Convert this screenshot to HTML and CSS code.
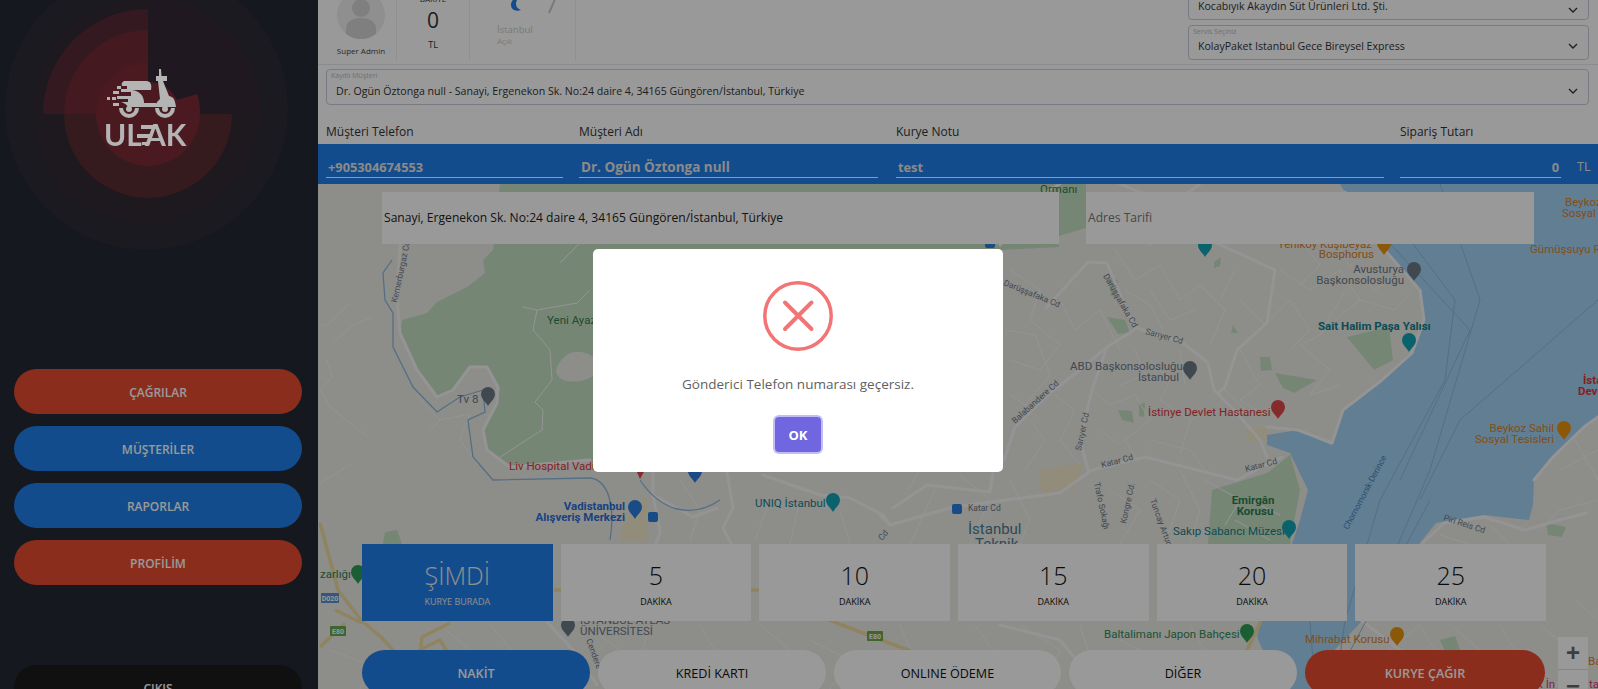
FILE: index.html
```html
<!DOCTYPE html>
<html lang="en">
<head>
    <meta charset="UTF-8">
    <meta name="viewport" content="width=device-width, initial-scale=1.0">
    <title>Ulak</title>
    <link rel="stylesheet" href="styles.css">
</head>
<body>
    <aside class="sidebar">
        <div class="logo">
            <svg viewBox="0 0 318 369" width="318" height="369">
                <circle cx="146.500" cy="108.500" r="141.500" fill="#1a1a20"/>
                <circle cx="146.500" cy="110" r="113.500" fill="#1e191f"/>
                <path d="M148 114V-3A113 113 0 0 1 260 110L260 114Z" fill="#201820"/>
                <path d="M148 114V9A105 105 0 0 0 43 114Z" fill="#341a20"/>
                <path d="M148 114H232A84 84 0 1 1 64 114Z" fill="#351b1e"/>
                <path d="M148 114V30A84 84 0 0 0 64 114Z" fill="#441a20"/>
                <path d="M148 114V62A52 52 0 0 0 96 114A52 52 0 1 0 200 114A52 52 0 0 0 197 94L177 100A32 32 0 0 0 148 82Z" fill="#4a1a20"/>
                <g fill="#b4b4b4">
                    <path d="M124 81H146C151 81 152 85 151 90H132C140 91 144 96 144 103V107H128C126 104 124 103 121 102H128V99H117V96H131V92H121V89H127V86H122C121 84 122 82 124 81Z"/>
                    <rect x="107" y="97" width="3" height="3"/>
                    <rect x="112" y="97" width="4" height="3"/>
                    <rect x="113" y="91" width="6" height="3"/>
                    <rect x="117" y="86" width="4" height="3"/>
                    <rect x="113" y="103" width="6" height="3"/>
                    <path d="M159 69L161 69L161.500 76H159Z"/>
                    <path d="M156 76H167V81H163L169 96C174 97 175 100 176 107H155C156 103 157 102 160 99L158 81H156Z"/>
                    <path d="M144 103H156V107H144Z"/>
                    <path d="M119 108A10 10 0 0 0 139 108H135A6 6 0 0 1 123 108Z"/>
                    <path d="M155 108A10 10 0 0 0 175 108H171A6 6 0 0 1 159 108Z"/>
                    <circle cx="129" cy="109" r="3"/>
                    <circle cx="165" cy="109" r="3"/>
                    <rect x="141" y="125" width="15" height="4"/>
                    <rect x="137" y="134" width="14" height="4"/>
                    <rect x="142" y="142" width="6" height="3"/>
                </g>
                <text class="logo-word" x="104" y="146">UL</text>
                <text class="logo-word" x="145" y="146">AK</text>
            </svg>
        </div>
        <nav class="menu">
            <a class="pill pill-red">ÇAĞRILAR</a>
            <a class="pill pill-blue">MÜŞTERİLER</a>
            <a class="pill pill-blue">RAPORLAR</a>
            <a class="pill pill-red">PROFİLİM</a>
            <a class="pill pill-black">ÇIKIŞ</a>
        </nav>
    </aside>

    <main class="content">
        <header class="topbar">
            <div class="top-cell user-cell">
                <svg class="avatar" viewBox="0 0 48 48" width="48" height="48">
                    <circle cx="24" cy="24" r="24" fill="#eee"/>
                    <circle cx="24" cy="17" r="9" fill="#d4d4d4"/>
                    <path d="M9 43V38C9 31 15 27 24 27S39 31 39 38V43C35 46 30 48 24 48S13 46 9 43Z" fill="#d4d4d4"/>
                </svg>
                <span class="user-name">Super Admin</span>
            </div>
            <div class="top-cell balance-cell">
                <span class="balance-title">BAKİYE</span>
                <span class="balance-value">0</span>
                <span class="balance-unit">TL</span>
            </div>
            <div class="top-cell weather-cell">
                <div class="weather-icons">
                    <svg viewBox="0 0 14 16" width="14" height="16">
                        <path d="M10 0C5 1 2 4 2 8S6 15 12 13C9 12 7 10 7 7S8 3 10 0Z" fill="#1f7fea"/>
                    </svg>
                    <svg viewBox="0 0 14 18" width="14" height="18">
                        <path d="M13 0L6 16" stroke="#ccc" stroke-width="2" fill="none"/>
                    </svg>
                </div>
                <span class="weather-city">İstanbul</span>
                <span class="weather-state">Açık</span>
            </div>
            <div class="top-selects">
                <div class="select select-cut">
                    <span class="select-text">Kocabıyık Akaydın Süt Ürünleri Ltd. Şti.</span>
                    <svg class="chevron" viewBox="0 0 10 6" width="10" height="6"><path d="M1 1L5 5L9 1" stroke="#333" stroke-width="1.300" fill="none"/></svg>
                </div>
                <div class="select">
                    <span class="select-label">Servis Seçiniz</span>
                    <span class="select-text">KolayPaket Istanbul Gece Bireysel Express</span>
                    <svg class="chevron" viewBox="0 0 10 6" width="10" height="6"><path d="M1 1L5 5L9 1" stroke="#333" stroke-width="1.300" fill="none"/></svg>
                </div>
            </div>
        </header>

        <div class="select select-wide">
            <span class="select-label">Kayıtlı Müşteri</span>
            <span class="select-text">Dr. Ogün Öztonga null - Sanayi, Ergenekon Sk. No:24 daire 4, 34165 Güngören/İstanbul, Türkiye</span>
            <svg class="chevron" viewBox="0 0 10 6" width="10" height="6"><path d="M1 1L5 5L9 1" stroke="#333" stroke-width="1.300" fill="none"/></svg>
        </div>

        <div class="field-grid field-labels">
            <span>Müşteri Telefon</span>
            <span>Müşteri Adı</span>
            <span>Kurye Notu</span>
            <span>Sipariş Tutarı</span>
        </div>
        <div class="field-grid field-band">
            <div class="field-value">+905304674553</div>
            <div class="field-value field-name">Dr. Ogün Öztonga null</div>
            <div class="field-value">test</div>
            <div class="field-value field-amount">0</div>
            <div class="field-unit">TL</div>
        </div>

        <section class="map-area">
            <svg class="map" viewBox="318 184 1280 505" width="1280" height="505">
                <defs>
                    <path id="pin" d="M0 9C-2 5-7 2-7-3A7 7 0 0 1 7-3C7 2 2 5 0 9Z"/>
                </defs>
                <rect x="318" y="184" width="1280" height="505" fill="#ecebe7"/>

                <!-- parks -->
                <g fill="#c5e0c4">
                    <path d="M500 184H1086V228L1059 236V247L1000 250L900 380L800 470L600 470L590 460L510 466L487 450L483 430L497 403L498 387L487 367L470 367L453 390L437 397L417 370L400 333L402 320L427 313L437 302L467 287L485 273L483 260L493 250Z"/>
                    <path d="M1212 490L1267 473L1290 455L1300 490L1290 544H1208Z"/>
                    <path d="M1347 337L1389 327L1393 360L1374 370Z"/>
                    <path d="M1109 277L1118 280L1116 297L1111 296Z"/>
                    <path d="M1107 317L1125 320L1130 333L1118 334Z"/>
                    <path d="M1275 373L1317 380L1294 393L1283 388Z"/>
                    <path d="M1260 357L1270 357L1272 370L1261 371Z"/>
                    <path d="M1118 410L1132 411L1134 423L1122 420Z"/>
                    <path d="M1139 404L1145 403L1144 417L1139 416Z"/>
                    <path d="M1214 262L1221 257L1220 266L1214 268Z"/>
                    <path d="M1233 325L1238 333H1231Z"/>
                    <path d="M1546 523L1566 527L1562 537L1548 535Z"/>
                    <path d="M385 532L397 530L402 544H383Z"/>
                    <path d="M1440 640L1455 636L1460 650L1445 652Z"/>
                </g>
                <path d="M560 362C570 346 592 350 600 365C600 380 570 386 560 378C554 373 556 368 560 362Z" fill="#ecebe7"/>
                <g fill="#f3ebcb">
                    <path d="M623 520L647 495V542H620Z"/>
                    <path d="M1040 480L1060 475V495L1045 497Z"/>
                    <path d="M1244 430L1267 427V440L1250 442Z"/>
                    <path d="M1040 470L1084 463L1075 490L1040 490Z"/>
                </g>

                <!-- sea -->
                <path d="M1340 184H1598V417L1584 427L1553 457L1534 480L1533 505L1529 520L1484 515L1436 523L1419 544L1362 621L1325 660L1320 689H1280L1257 637L1261 621L1290 550L1300 520L1308 490L1290 453L1267 445L1267 435L1298 430L1332 445L1343 410L1382 380L1412 353L1424 320L1420 290L1383 250L1345 192Z" fill="#a4d2f5"/>

                <!-- roads -->
                <g fill="none" stroke="#f7f7f7" stroke-width="1" stroke-linejoin="round">
                    <path d="M320 325H327L350 303M333 343L353 325L373 317M327 360L332 377L320 390L330 407L368 437M353 463L320 483"/>
                    <path d="M523 307L537 310L533 330L550 350L552 380L535 402L543 410L542 430L500 457M537 310L577 303L590 290M560 263L580 243"/>
                    <path d="M416 395L440 420L430 430M440 420L470 414L460 440L478 465"/>
                    <path d="M680 480L700 510L690 540M770 500L755 540M800 500L790 544M840 510L850 544M905 495L920 470M935 490L910 544M960 475L990 500L970 544M1010 480L1030 520L1020 544"/>
                    <path d="M1010 270L1040 290L1030 320L1060 345L1040 370L1010 360M1060 300L1075 330L1100 310L1120 350M1005 330L1035 335L1050 375L1025 405L1010 395M1030 420L1045 440L1025 470M1055 395L1075 410L1060 440L1080 465"/>
                    <path d="M1092 390L1110 405L1135 395L1150 420L1125 440L1140 465M1100 430L1120 445M1150 360L1170 380L1160 400L1190 420L1215 410M1180 350L1185 385M1135 350L1145 375L1120 385M1150 440L1190 450L1205 470M1190 420L1180 455"/>
                    <path d="M1115 250L1135 280L1160 265L1180 300L1200 285L1225 310L1210 345M1150 290L1170 320L1195 310M1235 270L1220 300M1125 290L1150 305L1165 335M1240 300L1265 325L1290 300L1310 330L1290 350M1280 270L1310 290L1340 270L1360 300L1335 320M1345 260L1375 290L1405 270M1300 240L1320 265L1300 285M1360 300L1395 310L1412 290"/>
                    <path d="M1240 350L1260 385L1240 400L1265 415M1300 345L1330 370L1310 395L1340 385M1225 390L1250 415L1285 405M1345 290L1320 335L1300 345"/>
                    <path d="M1110 490L1140 510L1120 544M1150 480L1180 500L1165 544M1180 470L1200 510L1190 544M1205 480L1240 500L1225 525M1250 500L1280 515M1235 520L1270 540"/>
                    <path d="M1440 535L1470 544M1490 525L1510 544M1540 530L1560 510L1598 500M1560 470L1598 450M1575 440L1598 480"/>
                    <path d="M585 625L620 650L610 689M650 625L640 660L680 689M700 625L720 660L700 689M760 625L790 650L770 689M810 640L850 660L830 689M900 625L920 670L960 689M975 625L1000 660L985 689M1020 625L1060 650L1040 689M1080 625L1100 689M1120 640L1160 660L1130 689M1190 625L1210 660L1180 689"/>
                    <path d="M1390 650L1420 625L1440 660L1420 689M1450 625L1480 650L1470 689M1500 625L1520 660L1500 689M1540 625L1570 650L1555 689M1575 600L1598 620"/>
                    <path d="M330 650L370 665L360 689M440 625L470 650L450 689M490 625L520 660L500 689"/>
                </g>
                <g fill="none" stroke="#f7f7f7" stroke-width="3" stroke-linejoin="round" stroke-linecap="round">
                    <path d="M400 243L397 297L400 333L417 370L437 397L453 390L470 367L487 367L498 387L497 403L483 430L487 450L510 467L590 460"/>
                    <path d="M763 475L820 495L850 498L883 515L890 525L953 507L1060 493L1092 470L1145 457L1237 480L1282 457"/>
                    <path d="M890 525L880 515M993 472L990 492L927 485L893 508"/>
                    <path d="M653 465V495L693 517L717 508M653 495L660 532L655 547M727 472L733 508L723 528L733 547"/>
                    <path d="M1046 308L1088 262L1107 263L1134 327L1183 343L1208 363L1214 390L1237 413L1260 440L1267 457"/>
                    <path d="M1134 330L1107 347L1076 373L1050 393L1015 427L1004 460"/>
                    <path d="M1088 470L1080 440L1092 390L1107 347"/>
                    <path d="M1210 240L1275 270L1267 323L1237 350L1225 387L1218 393"/>
                    <path d="M1420 290L1424 320L1412 353L1382 380L1343 410L1332 443L1298 430L1267 427"/>
                    <path d="M1345 192L1383 248L1418 288"/>
                    <path d="M1423 543L1444 523L1484 517L1525 530L1549 523L1586 513"/>
                    <path d="M1534 480L1553 457L1584 427L1598 417"/>
                    <path d="M548 623L573 650L597 685"/>
                    <path d="M1000 245L1040 195L1060 184M1150 244L1170 205L1200 184M1120 184L1160 200"/>
                    <path d="M1362 621L1400 650L1440 689M1000 625L1060 640L1100 689"/>
                </g>
                <g fill="none" stroke="#eedc9f" stroke-width="3.500" stroke-linejoin="round">
                    <path d="M320 523L332 567L338 590L361 620L381 637L402 660L418 689"/>
                    <path d="M450 623L422 637L416 689"/>
                    <path d="M320 647L345 623"/>
                    <path d="M335 610L362 623"/>
                    <path d="M400 660L440 640L470 689"/>
                    <path d="M554 590H760L834 622L900 647L960 670"/>
                    <path d="M1261 621L1240 665"/>
                </g>
                <g fill="none" stroke="#8db9dd" stroke-width="1.300">
                    <path d="M392 260L383 273L385 300L393 313L393 347L413 387L437 412L460 397L483 390L485 412L468 420L473 457L493 480L590 478"/>
                    <path d="M590 478C610 480 615 510 610 540M640 480C660 510 690 520 720 500"/>
                </g>
                <g fill="none" stroke="#8bb9e0" stroke-width="1">
                    <path d="M1440 184L1480 300L1430 470L1365 621"/>
                    <path d="M1598 300L1460 420L1420 500"/>
                    <path d="M1350 200L1470 330L1400 480"/>
                    <path d="M1410 240L1455 300L1445 380L1380 500L1345 621"/>
                    <path d="M1430 500L1330 689"/>
                    <path d="M1310 621L1315 689M1345 621L1335 689"/>
                </g>

                <!-- labels -->
                <g class="map-text">
                    <text x="1040" y="193" fill="#2e7d4f">Ormanı</text>
                    <text x="1565" y="206" fill="#d9822b">Beykoz</text>
                    <text x="1562" y="217" fill="#d9822b">Sosyal</text>
                    <text x="1530" y="253" fill="#d9822b">Gümüşsuyu R</text>
                    <text x="1372" y="248" text-anchor="end" fill="#d9822b">Yeniköy Kuşibeyaz</text>
                    <text x="1374" y="258" text-anchor="end" fill="#d9822b">Bosphorus</text>
                    <text x="1404" y="273" text-anchor="end" fill="#6b7a86">Avusturya</text>
                    <text x="1404" y="284" text-anchor="end" fill="#6b7a86">Başkonsolosluğu</text>
                    <text x="1318" y="330" class="bold" fill="#12808c">Sait Halim Paşa Yalısı</text>
                    <text x="1070" y="370" fill="#6b7a86">ABD Başkonsolosluğu</text>
                    <text x="1179" y="381" text-anchor="end" fill="#6b7a86">İstanbul</text>
                    <text x="1148" y="416" fill="#d9383a">İstinye Devlet Hastanesi</text>
                    <text x="1554" y="432" text-anchor="end" fill="#d9822b">Beykoz Sahil</text>
                    <text x="1554" y="443" text-anchor="end" fill="#d9822b">Sosyal Tesisleri</text>
                    <text x="1583" y="384" class="bold" fill="#d9383a">İsta</text>
                    <text x="1578" y="395" class="bold" fill="#d9383a">Devl</text>
                    <text x="547" y="324" fill="#2e7d4f">Yeni Ayazağa</text>
                    <text x="457" y="403" fill="#6b7a86">Tv 8</text>
                    <text x="509" y="470" fill="#d9383a">Liv Hospital Vadi</text>
                    <text x="625" y="510" class="bold" text-anchor="end" fill="#2a6fd6">Vadistanbul</text>
                    <text x="625" y="521" class="bold" text-anchor="end" fill="#2a6fd6">Alışveriş Merkezi</text>
                    <text x="755" y="507" fill="#12808c">UNIQ İstanbul</text>
                    <text x="968" y="511" class="small" fill="#6b7a86">Katar Cd</text>
                    <text x="968" y="534" class="big" fill="#4c7a92">İstanbul</text>
                    <text x="975" y="549" class="big" fill="#4c7a92">Teknik</text>
                    <text x="1253" y="504" class="bold" text-anchor="middle" fill="#2e7d4f">Emirgân</text>
                    <text x="1255" y="515" class="bold" text-anchor="middle" fill="#2e7d4f">Korusu</text>
                    <text x="1173" y="535" fill="#12808c">Sakıp Sabancı Müzesi</text>
                    <text x="320" y="578" fill="#2e7d4f">zarlığı</text>
                    <text x="580" y="624" fill="#6b7a86">İSTANBUL ATLAS</text>
                    <text x="580" y="635" fill="#6b7a86">ÜNİVERSİTESİ</text>
                    <text x="1104" y="638" fill="#2e8b57">Baltalimanı Japon Bahçesi</text>
                    <text x="1305" y="643" fill="#d9822b">Mihrabat Korusu</text>
                    <text x="1588" y="665" fill="#d9822b">Ba</text>
                    <text x="1537" y="688" fill="#d9387a">k İn</text>
                    <text x="1589" y="688" fill="#d9387a">ta</text>
                </g>
                <g class="map-text small" fill="#6b7a86">
                    <text transform="translate(1145 334) rotate(15)">Sarıyer Cd</text>
                    <text transform="translate(1103 276) rotate(60)">Darüşşafaka Cd</text>
                    <text transform="translate(1003 285) rotate(22)">Darüşşafaka Cd</text>
                    <text transform="translate(1015 424) rotate(-42)">Balabandere Cd</text>
                    <text transform="translate(1081 451) rotate(-78)">Sarıyer Cd</text>
                    <text transform="translate(1102 468) rotate(-15)">Katar Cd</text>
                    <text transform="translate(1246 472) rotate(-15)">Katar Cd</text>
                    <text transform="translate(1443 520) rotate(18)">Pirî Reis Cd</text>
                    <text transform="translate(397 303) rotate(-78)">Kemerburgaz Cd.</text>
                    <text transform="translate(1348 530) rotate(-62)" fill="#4b7fb8">Chornomorsk-Derince</text>
                    <text transform="translate(1094 483) rotate(78)">Trafo Sokağı</text>
                    <text transform="translate(1126 524) rotate(-78)">Kongre Cd.</text>
                    <text transform="translate(1150 500) rotate(70)">Tuncay Artun Cd</text>
                    <text transform="translate(586 640) rotate(70)">Cendere</text>
                    <text transform="translate(882 541) rotate(-50)">Cd</text>
                </g>

                <!-- pins -->
                <use href="#pin" transform="translate(1384 246)" fill="#e8930c"/>
                <use href="#pin" transform="translate(1414 272)" fill="#6b7a86"/>
                <use href="#pin" transform="translate(1409 343)" fill="#12a5b5"/>
                <use href="#pin" transform="translate(1190 371)" fill="#6b7a86"/>
                <use href="#pin" transform="translate(1278 410)" fill="#e0484a"/>
                <use href="#pin" transform="translate(1564 431)" fill="#e8930c"/>
                <use href="#pin" transform="translate(1205 248)" fill="#12a5b5"/>
                <use href="#pin" transform="translate(488 397)" fill="#6b7a86"/>
                <use href="#pin" transform="translate(635 510)" fill="#2a7fe0"/>
                <use href="#pin" transform="translate(695 474)" fill="#2a7fe0"/>
                <use href="#pin" transform="translate(833 503)" fill="#12a5b5"/>
                <use href="#pin" transform="translate(1289 530)" fill="#12a5b5"/>
                <use href="#pin" transform="translate(1247 634)" fill="#2e9d57"/>
                <use href="#pin" transform="translate(1397 637)" fill="#e8930c"/>
                <use href="#pin" transform="translate(358 575)" fill="#2e9d57"/>
                <use href="#pin" transform="translate(568 628)" fill="#6b7a86"/>
                <path d="M636 470H645L640 479Z" fill="#e0484a"/>
                <g fill="#2a7fe0">
                    <rect x="648" y="512" width="10" height="10" rx="2"/>
                    <rect x="952" y="504" width="10" height="10" rx="2"/>
                    <rect x="985" y="241" width="10" height="7" rx="2"/>
                </g>
                <g class="shield">
                    <rect x="321" y="593" width="18" height="10" rx="1" fill="#5b8fd0"/>
                    <text x="330" y="601" fill="#fff">D020</text>
                    <rect x="330" y="626" width="16" height="10" rx="1" fill="#6aa84f"/>
                    <text x="338" y="634" fill="#fff">E80</text>
                    <rect x="867" y="631" width="16" height="10" rx="1" fill="#6aa84f"/>
                    <text x="875" y="639" fill="#fff">E80</text>
                </g>
            </svg>

            <div class="address-row">
                <div class="address-box">Sanayi, Ergenekon Sk. No:24 daire 4, 34165 Güngören/İstanbul, Türkiye</div>
                <div class="address-box address-note">Adres Tarifi</div>
            </div>

            <div class="time-grid">
                <div class="time-cell time-active"><strong>ŞİMDİ</strong><span>KURYE BURADA</span></div>
                <div class="time-cell"><strong>5</strong><span>DAKİKA</span></div>
                <div class="time-cell"><strong>10</strong><span>DAKİKA</span></div>
                <div class="time-cell"><strong>15</strong><span>DAKİKA</span></div>
                <div class="time-cell"><strong>20</strong><span>DAKİKA</span></div>
                <div class="time-cell"><strong>25</strong><span>DAKİKA</span></div>
            </div>

            <div class="pay-row">
                <a class="pill pill-blue">NAKİT</a>
                <a class="pill pill-white">KREDİ KARTI</a>
                <a class="pill pill-white">ONLINE ÖDEME</a>
                <a class="pill pill-white">DİĞER</a>
                <a class="pill pill-red">KURYE ÇAĞIR</a>
            </div>

            <div class="zoom-ctrl">
                <span class="zoom-plus">+</span>
                <span>−</span>
            </div>
        </section>
    </main>

    <div class="overlay">
        <div class="modal">
            <svg class="error-icon" viewBox="0 0 70 70" width="70" height="70">
                <circle cx="35" cy="35" r="33.200" stroke="#f27474" stroke-width="3.500" fill="none"/>
                <path d="M22 21.500L48.500 48M48.500 21.500L22 48" stroke="#f27474" stroke-width="4" stroke-linecap="round" fill="none"/>
            </svg>
            <p class="modal-text">Gönderici Telefon numarası geçersiz.</p>
            <button class="modal-btn">OK</button>
        </div>
    </div>
</body>
</html>
```

FILE: styles.css
```css
* {
    margin: 0;
    padding: 0;
    box-sizing: border-box;
}

body {
    display: flex;
    height: 689px;
    overflow: hidden;
    background: #fff;
    color: #333;
    font-family: "Open Sans", sans-serif;
}

/* sidebar */
.sidebar {
    flex: 0 0 318px;
    height: 689px;
    overflow: hidden;
    background: #232833;
}

.logo {
    position: relative;
    z-index: 20;
    height: 369px;
}

.logo svg {
    display: block;
}

.logo-word {
    font-family: Lato, sans-serif;
    font-size: 30px;
    font-weight: 700;
    fill: #b4b4b4;
}

.menu {
    display: flex;
    flex-direction: column;
    gap: 12px;
    padding: 0 16px 0 14px;
}

.pill {
    display: flex;
    align-items: center;
    justify-content: center;
    height: 45px;
    padding-top: 2px;
    border-radius: 23px;
    font-size: 12px;
    font-weight: 600;
    color: #fff;
}

.pill-red {
    background: #e84c31;
}

.pill-blue {
    background: #1f7fea;
}

.pill-black {
    margin-top: 68px;
    background: #1c1c1c;
}

.pill-white {
    background: #fff;
    color: #111;
    font-weight: 400;
}

/* header */
.content {
    flex: 1;
    display: flex;
    flex-direction: column;
    height: 689px;
    overflow: hidden;
    background: #fff;
}

.topbar {
    display: flex;
    align-items: flex-end;
    height: 65px;
    overflow: hidden;
    flex: none;
    padding: 0 9px 4px 8px;
    border-bottom: 1px solid #e4ebf2;
}

.top-cell {
    display: flex;
    flex-direction: column;
    align-items: center;
    height: 92px;
    flex: none;
    padding-bottom: 4px;
    border-right: 1px solid #eee;
}

.user-cell {
    width: 71px;
    justify-content: flex-end;
}

.avatar {
    display: block;
    margin-bottom: 6px;
}

.user-name {
    font-size: 8px;
    line-height: 11px;
    color: #444;
}

.balance-cell {
    width: 73px;
    justify-content: flex-end;
    color: #333;
}

.balance-title {
    font-size: 8px;
    line-height: 10px;
}

.balance-value {
    font-size: 21px;
    line-height: 30px;
    margin-top: 1px;
}

.balance-unit {
    font-size: 9px;
    line-height: 15px;
    margin: 2px 0 4px;
}

.weather-cell {
    width: 106px;
    align-items: flex-start;
    justify-content: flex-end;
    padding-left: 27px;
}

.weather-icons {
    display: flex;
    gap: 20px;
    margin-bottom: 9px;
    margin-left: 12px;
}

.weather-city {
    font-size: 9.500px;
    line-height: 12px;
    color: #ccc;
}

.weather-state {
    font-size: 8px;
    line-height: 10px;
    color: #ccc;
    margin-bottom: 10px;
}

.top-selects {
    display: flex;
    flex-direction: column;
    gap: 5px;
    width: 401px;
    margin-left: auto;
}

.select {
    position: relative;
    display: flex;
    align-items: center;
    justify-content: space-between;
    height: 35px;
    flex: none;
    padding: 7px 10px 0 9px;
    border: 1px solid #ccd;
    border-radius: 4px;
    background: #fff;
}

.select-cut {
    padding-top: 0;
    align-items: flex-end;
    padding-bottom: 6px;
}

.select-label {
    position: absolute;
    top: 1px;
    left: 4px;
    font-size: 7px;
    color: #bbb;
}

.select-text {
    font-size: 10.600px;
    color: #333;
}

.select-wide {
    height: 36px;
    margin: 4px 9px 0 8px;
}

/* fields */
.field-grid {
    display: grid;
    grid-template-columns: 237px 301px 488px 161px 1fr;
    column-gap: 16px;
    flex: none;
    padding: 0 8px;
}

.field-labels {
    height: 39px;
    align-items: end;
    padding-bottom: 4px;
    font-size: 12px;
    color: #333;
}

.field-band {
    height: 40px;
    padding-top: 11px;
    background: #1f7fea;
    color: #fff;
}

.field-value {
    height: 23px;
    line-height: 24px;
    padding: 0 2px;
    font-size: 12.800px;
    font-weight: 700;
    color: #e6e6e6;
    border-bottom: 1px solid #fff;
}

.field-name {
    margin-right: 2px;
    font-size: 13.500px;
}

.field-amount {
    text-align: right;
}

.field-unit {
    font-size: 12.500px;
    line-height: 23px;
    color: #e6e6e6;
}

/* map */
.map-area {
    position: relative;
    flex: 1;
    overflow: hidden;
    padding-top: 8px;
}

.map {
    position: absolute;
    top: 0;
    left: 0;
}

.map-text {
    font-family: Roboto, sans-serif;
    font-size: 11.500px;
}

.map-text .bold {
    font-weight: 700;
}

.map-text.small,
.map-text .small {
    font-size: 8.500px;
}

.map-text .big {
    font-size: 15px;
}

.shield {
    font-family: Roboto, sans-serif;
    font-size: 7px;
    font-weight: 700;
    text-anchor: middle;
}

.address-row {
    position: relative;
    display: grid;
    grid-template-columns: 677px 448px;
    column-gap: 27px;
    margin-left: 64px;
    width: 1152px;
}

.address-box {
    height: 52px;
    line-height: 52px;
    padding-left: 2px;
    background: #fff;
    font-size: 12.100px;
    color: #222;
}

.address-note {
    color: #777;
}

.time-grid {
    position: relative;
    display: grid;
    grid-template-columns: repeat(6, 1fr);
    column-gap: 8px;
    width: 1184px;
    height: 77px;
    margin: 300px 0 0 44px;
}

.time-cell {
    display: flex;
    flex-direction: column;
    align-items: center;
    padding-top: 15px;
    background: #fff;
    color: #111;
}

.time-cell strong {
    font-size: 25px;
    line-height: 32px;
    font-weight: 300;
}

.time-cell span {
    font-size: 9px;
    line-height: 14px;
    margin-top: 4px;
}

.time-active {
    background: #1f7fea;
    color: #eee;
}

.pay-row {
    position: relative;
    display: grid;
    grid-template-columns: 228px 228px 227px 228px 240px;
    column-gap: 8px;
    width: 1184px;
    margin: 29px 0 0 44px;
}

.pay-row .pill {
    font-size: 12.600px;
}

.zoom-ctrl {
    position: absolute;
    right: 10px;
    top: 453px;
    display: flex;
    flex-direction: column;
    align-items: center;
    width: 30px;
    height: 64px;
    background: #fff;
    font-family: "Liberation Sans", sans-serif;
    font-size: 24px;
    font-weight: 700;
    line-height: 32px;
    color: #666;
}

.zoom-plus {
    width: 100%;
    text-align: center;
    border-bottom: 1px solid #ddd;
}

/* alert */
.overlay {
    position: fixed;
    top: 0;
    left: 0;
    right: 0;
    bottom: 0;
    z-index: 10;
    display: flex;
    align-items: center;
    justify-content: center;
    padding: 32px 2px 0 0;
    background: rgba(0, 0, 0, 0.4);
}

.modal {
    display: flex;
    flex-direction: column;
    align-items: center;
    width: 410px;
    height: 223px;
    padding-top: 32px;
    border-radius: 5px;
    background: #fff;
}

.error-icon {
    display: block;
}

.modal-text {
    margin-top: 24px;
    font-size: 13.500px;
    line-height: 18px;
    color: #5f5f5f;
}

.modal-btn {
    width: 46px;
    height: 35px;
    margin-top: 24px;
    border: none;
    border-radius: 4px;
    background: #7066e0;
    color: #fff;
    font-family: "Open Sans", sans-serif;
    font-size: 13px;
    font-weight: 700;
    box-shadow: 0 0 0 2px #c2bdf5;
}
```
